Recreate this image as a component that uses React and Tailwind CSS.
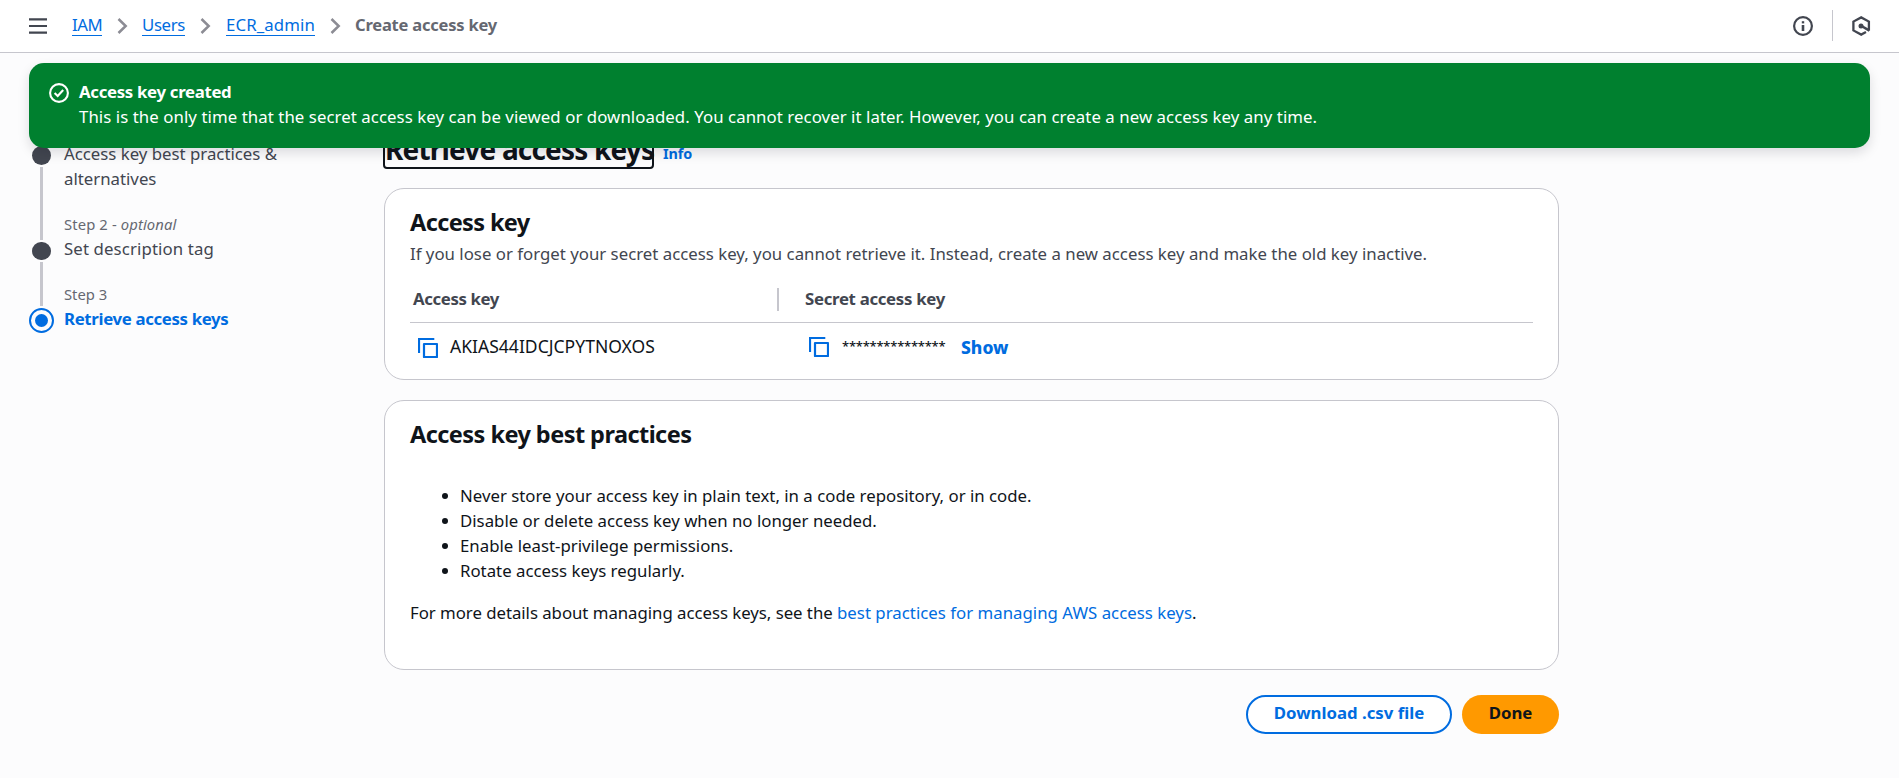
import React from "react";

const PRACTICES = [
  "Never store your access key in plain text, in a code repository, or in code.",
  "Disable or delete access key when no longer needed.",
  "Enable least-privilege permissions.",
  "Rotate access keys regularly.",
];

function Chevron({ className }) {
  return (
    <svg className={className} width="11" height="16" viewBox="0 0 11 16" fill="none" stroke="#8c8c94" strokeWidth="2.5">
      <path d="M1.5 1 L8.7 8 L1.5 15" />
    </svg>
  );
}

function CopyIcon({ className }) {
  return (
    <svg className={className} width="20" height="20" viewBox="0 0 20 20" fill="none" stroke="#006ce0" strokeWidth="2.2">
      <path d="M1 15 V1 H16.3" />
      <rect x="6" y="6" width="13" height="13" strokeLinejoin="round" />
    </svg>
  );
}

function Header() {
  return (
    <header className="flex h-[53px] shrink-0 items-start border-b border-[#c6c6cd] bg-white pl-[29px] pr-[28px]">
      <svg className="mt-[18px]" width="18" height="16" viewBox="0 0 18 16" fill="none" stroke="#424650" strokeWidth="2.2">
        <path d="M0 1.4 H18 M0 8 H18 M0 14.6 H18" />
      </svg>
      <nav className="ml-[25px] mt-3 flex items-start text-[16.8px] leading-[25px] text-[#006ce0]">
        <a className="h-6 w-[30px] whitespace-nowrap border-b border-[#006ce0] tracking-[-0.4px]">IAM</a>
        <Chevron className="ml-[15px] mt-[6px]" />
        <a className="ml-[14px] h-6 w-[43px] whitespace-nowrap border-b border-[#006ce0] tracking-[-0.35px]">Users</a>
        <Chevron className="ml-[15px] mt-[6px]" />
        <a className="ml-[15px] h-6 w-[89px] whitespace-nowrap border-b border-[#006ce0] tracking-[0.1px]">ECR_admin</a>
        <Chevron className="ml-[15px] mt-[6px]" />
        <span className="ml-[14px] whitespace-nowrap text-[16.5px] font-bold tracking-[-0.2px] text-[#656871]">Create access key</span>
      </nav>
      <div className="ml-auto flex items-start">
        <svg className="mt-4" width="20" height="20" viewBox="0 0 20 20" fill="none" stroke="#424650">
          <circle cx="10" cy="10" r="8.9" strokeWidth="2.2" />
          <path d="M8.8 6.3 H11.2" strokeWidth="2.2" />
          <path d="M10 9 V15" strokeWidth="2.6" />
        </svg>
        <div className="ml-[19px] mt-[10px] h-[31px] w-px bg-[#c6c6cd]" />
        <svg className="ml-[19px] mt-4" width="19" height="20" viewBox="0 0 19 20" fill="none" stroke="#424650" strokeWidth="2.3">
          <path d="M16.9 14.6 V5.6 L9.2 1.4 L1.4 5.6 V14.4 L9.2 18.6 L14 16" />
          <path d="M9.5 10 L17.4 14.6" strokeWidth="2.6" />
          <circle cx="9" cy="10" r="2.5" fill="#424650" stroke="none" />
        </svg>
      </div>
    </header>
  );
}

function Flash() {
  return (
    <div className="relative z-10 ml-[29px] mr-[29px] mt-[10px] flex h-[85px] shrink-0 rounded-[15px] bg-[#00802f] pl-5 pt-4 text-[16.8px] leading-[25px] text-white shadow-[0_5px_12px_rgba(0,7,22,0.13)]">
      <svg className="mt-1" width="20" height="20" viewBox="0 0 20 20" fill="none" stroke="#ffffff" strokeWidth="2.1">
        <circle cx="10" cy="10" r="8.9" />
        <path d="M5.6 9.9 L8.7 12.9 L14.2 7" />
      </svg>
      <div className="-mt-[0.5px] ml-[10px] whitespace-nowrap">
        <p className="font-bold tracking-[-0.31px]">Access key created</p>
        <p className="tracking-[0.07px]">
          This is the only time that the secret access key can be viewed or downloaded. You cannot recover it later. However, you can create a new access key any time.
        </p>
      </div>
    </div>
  );
}

function Steps() {
  return (
    <aside className="flex w-[355px] shrink-0 pt-[10px]">
      <div className="flex w-[25px] shrink-0 flex-col items-center pt-[5px]">
        <div className="size-[18.5px] shrink-0 rounded-full bg-[#424650]" />
        <div className="mt-[2.5px] h-[73px] w-[3px] shrink-0 bg-[#c6c6cd]" />
        <div className="mt-[1.5px] size-[18.5px] shrink-0 rounded-full bg-[#424650]" />
        <div className="mt-[1.5px] h-[44px] w-[3px] shrink-0 bg-[#c6c6cd]" />
        <div className="mt-[2.5px] flex size-[25px] shrink-0 items-center justify-center rounded-full border-[2.5px] border-[#006ce0]">
          <div className="size-[13px] rounded-full bg-[#006ce0]" />
        </div>
      </div>
      <ol className="ml-[10px] -mt-[0.5px] whitespace-nowrap text-[16.8px] leading-[25px] text-[#424650]">
        <li>
          Access key best practices &amp;
          <br />
          alternatives
        </li>
        <li className="mt-[23px]">
          <p className="h-[22px] text-[14.8px] leading-5 tracking-[0.12px] text-[#656871]">
            Step 2 - <i>optional</i>
          </p>
          <p className="tracking-[0.12px]">Set description tag</p>
        </li>
        <li className="mt-[23px]">
          <p className="h-[22px] text-[14.8px] leading-5 text-[#656871]">Step 3</p>
          <p className="font-bold tracking-[-0.34px] text-[#006ce0]">Retrieve access keys</p>
        </li>
      </ol>
    </aside>
  );
}

function AccessKeyCard() {
  return (
    <section className="mt-[21px] h-[192px] rounded-[20px] border border-[#c6c6cd] bg-white px-[25px] pt-[18px]">
      <h2 className="text-[23.5px] font-bold leading-[30px] tracking-[-0.62px]">Access key</h2>
      <p className="mt-[3.5px] whitespace-nowrap tracking-[0.01px] text-[#424650]">
        If you lose or forget your secret access key, you cannot retrieve it. Instead, create a new access key and make the old key inactive.
      </p>
      <div className="mt-[20.5px] flex h-[37px] border-b border-[#c6c6cd] pl-[3px] font-bold text-[#424650]">
        <span className="w-[364px] tracking-[-0.38px]">Access key</span>
        <div className="mt-[2px] h-[23px] w-[2px] bg-[#c6c6cd]" />
        <span className="ml-[26px] tracking-[-0.3px]">Secret access key</span>
      </div>
      <div className="flex items-start pt-[11px]">
        <CopyIcon className="ml-2 mt-1" />
        <span className="ml-[12px] w-[359px] text-[17.5px] tracking-[0.02px]">AKIAS44IDCJCPYTNOXOS</span>
        <CopyIcon className="mt-[3px]" />
        <span className="ml-[13px] w-[105px] text-[13px] font-medium tracking-[-0.23px]">***************</span>
        <span className="ml-[14px] pt-px text-[17.5px] font-extrabold text-[#006ce0]">Show</span>
      </div>
    </section>
  );
}

function PracticesCard() {
  return (
    <section className="mt-5 h-[270px] rounded-[20px] border border-[#c6c6cd] bg-white px-[25px] pt-[18px]">
      <h2 className="text-[23.5px] font-bold leading-[30px] tracking-[-0.55px]">Access key best practices</h2>
      <ul className="mt-[33.5px] tracking-[0.01px]">
        {PRACTICES.map((text) => (
          <li key={text} className="flex items-center pl-8">
            <span className="mt-[2px] size-[6px] rounded-full bg-[#0f141a]" />
            <span className="ml-3">{text}</span>
          </li>
        ))}
      </ul>
      <p className="mt-[17px]">
        <span className="tracking-[-0.03px]">For more details about managing access keys, see the </span>
        <a className="tracking-[0.02px] text-[#006ce0]">best practices for managing AWS access keys</a>.
      </p>
    </section>
  );
}

export default function App() {
  return (
    <div className="flex h-[778px] w-full flex-col overflow-hidden bg-[#fcfcfd] font-['Noto_Sans','Open_Sans',sans-serif] text-[16.8px] leading-[25px] text-[#0f141a]">
      <Header />
      <Flash />
      <div className="-mt-[17px] flex pl-[29px]">
        <Steps />
        <main className="w-[1175px] shrink-0">
          <div className="flex h-9 items-start">
            <h1 className="ml-px w-[267px] whitespace-nowrap rounded-[2px] text-[28px] font-bold leading-9 tracking-[-0.82px] outline-2 outline-[#0f141a]">Retrieve access keys</h1>
            <a className="ml-[11px] pt-[13px] text-[14.4px] font-bold leading-5 tracking-[-0.1px] text-[#006ce0]">Info</a>
          </div>
          <AccessKeyCard />
          <PracticesCard />
          <div className="mt-[25px] flex justify-end gap-[10px]">
            <button className="flex h-[39px] w-[206px] justify-center rounded-full border-2 border-[#006ce0] bg-white pt-[3px] font-bold text-[#006ce0]">Download .csv file</button>
            <button className="flex h-[39px] w-[97px] justify-center rounded-full bg-[#ff9900] pt-[5px] font-bold">Done</button>
          </div>
        </main>
      </div>
    </div>
  );
}
